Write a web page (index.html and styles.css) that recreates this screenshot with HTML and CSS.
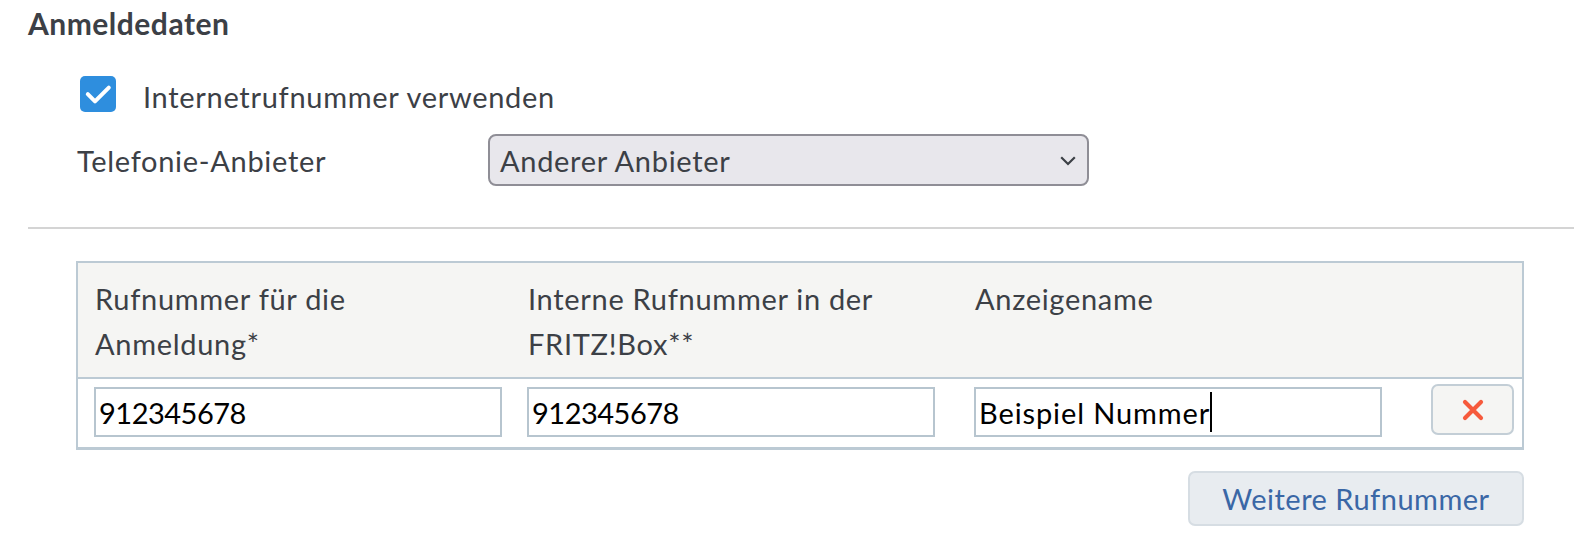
FILE: index.html
```html
<!DOCTYPE html>
<html lang="de">
<head>
<meta charset="utf-8">
<title>Anmeldedaten</title>
<link rel="stylesheet" href="styles.css">
</head>
<body>
<section class="section">
  <h2 class="section-title">Anmeldedaten</h2>

  <label class="check-row">
    <span class="checkbox">
      <svg viewBox="0 0 36 36" width="36" height="36" aria-hidden="true">
        <path d="M7.8 18.2 L15 25.4 L28.8 11.6" fill="none" stroke="#fff" stroke-width="4" stroke-linecap="round" stroke-linejoin="round"/>
      </svg>
    </span>
    <span class="check-label">Internetrufnummer verwenden</span>
  </label>

  <div class="field-row">
    <span class="field-label">Telefonie-Anbieter</span>
    <div class="select">
      <span class="select-value">Anderer Anbieter</span>
      <svg class="chevron" viewBox="0 0 16 10" width="16" height="10" aria-hidden="true">
        <path d="M1.2 1.2 L8 8 L14.8 1.2" fill="none" stroke="#3c4046" stroke-width="2.2"/>
      </svg>
    </div>
  </div>

  <hr class="divider">

  <div class="numbers">
    <div class="numbers-head">
      <div class="cell">Rufnummer für die Anmeldung*</div>
      <div class="cell">Interne Rufnummer in der FRITZ!Box**</div>
      <div class="cell">Anzeigename</div>
      <div class="cell"></div>
    </div>
    <div class="numbers-row">
      <div class="cell"><div class="input numeric">912345678</div></div>
      <div class="cell"><div class="input numeric">912345678</div></div>
      <div class="cell"><div class="input">Beispiel Nummer<span class="caret"></span></div></div>
      <div class="cell">
        <button class="delete" type="button" aria-label="Löschen">
          <svg viewBox="0 0 22 22" width="22" height="22" aria-hidden="true">
            <path d="M3 3 L19 19 M19 3 L3 19" stroke="#f65a3c" stroke-width="4.2" stroke-linecap="round"/>
          </svg>
        </button>
      </div>
    </div>
  </div>

  <div class="actions">
    <button class="more" type="button">Weitere Rufnummer</button>
  </div>
</section>
</body>
</html>
```

FILE: styles.css
```css
html, body {
  margin: 0;
  padding: 0;
  background: #fff;
}

body {
  font-family: "Lato", "Liberation Sans", sans-serif;
  font-size: 29px;
  line-height: 45px;
  letter-spacing: 0.7px;
  color: #3c4046;
}

.section {
  padding: 0 0 0 28px;
}

.section-title {
  margin: 0;
  font-size: 30px;
  font-weight: 700;
  letter-spacing: 0.5px;
  line-height: 47px;
}

.check-row {
  display: flex;
  align-items: center;
  gap: 27px;
  margin: 29px 0 0 52px;
  height: 36px;
}

.checkbox {
  width: 36px;
  height: 36px;
  border-radius: 5px;
  background: #2e8ede;
  display: flex;
}

.check-label {
  position: relative;
  top: 2px;
}

.field-row {
  display: flex;
  align-items: center;
  margin: 22px 0 0 49px;
}

.field-label {
  width: 411px;
}

.select {
  box-sizing: border-box;
  width: 601px;
  height: 52px;
  border: 2px solid #8f8e96;
  border-radius: 8px;
  background: #e8e7ec;
  display: flex;
  align-items: center;
  justify-content: space-between;
  padding: 0 11px 0 10px;
}

.chevron {
  margin-top: 2px;
}

.divider {
  margin: 41px 0 0;
  border: 0;
  height: 2px;
  background: #d4d4d4;
}

.numbers {
  margin: 32px 50px 0 48px;
  border: 2px solid #bccad4;
  border-bottom-width: 3px;
}

.numbers-head,
.numbers-row {
  display: grid;
  grid-template-columns: 433px 447px 457px 1fr;
}

.numbers-head {
  background: #f5f5f3;
  border-bottom: 2px solid #bccad4;
  padding: 13px 0 11px;
}

.numbers-head .cell {
  padding: 0 40px 0 17px;
}

.numbers-row {
  padding: 8px 0 10px;
}

.numbers-row .cell {
  padding-left: 16px;
}

.input {
  box-sizing: border-box;
  width: 408px;
  height: 50px;
  border: 2px solid #b7c5cf;
  background: #fff;
  color: #000;
  padding: 0 3px;
  display: flex;
  align-items: center;
  white-space: nowrap;
  letter-spacing: 0.9px;
}

.input.numeric {
  letter-spacing: -0.5px;
}

.caret {
  display: inline-block;
  width: 2px;
  height: 40px;
  background: #000;
  margin-left: 0;
}

.delete {
  box-sizing: border-box;
  width: 83px;
  height: 51px;
  margin-top: -3px;
  border: 2px solid #c3ced6;
  border-radius: 7px;
  background: #f5f5f3;
  display: flex;
  align-items: center;
  justify-content: center;
  padding: 0;
}

.actions {
  display: flex;
  justify-content: flex-end;
  margin: 21px 50px 0 0;
}

.more {
  box-sizing: border-box;
  width: 336px;
  height: 55px;
  border: 2px solid #d6dde3;
  border-radius: 7px;
  background: #e8ecf0;
  color: #3a67a6;
  font-family: inherit;
  font-size: 29px;
  letter-spacing: 0.5px;
}
```
